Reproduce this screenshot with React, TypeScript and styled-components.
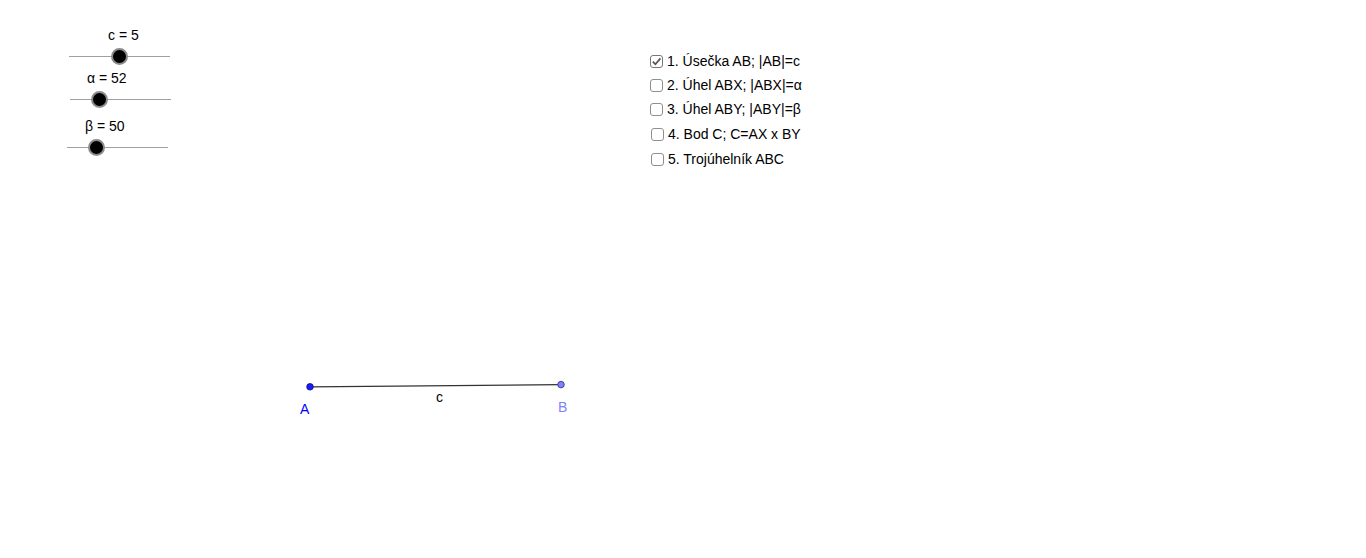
import styled, { createGlobalStyle } from "styled-components";

const GlobalStyle = createGlobalStyle`
  html, body {
    margin: 0;
    padding: 0;
    background: #ffffff;
  }
  body {
    font-family: "Liberation Sans", Arial, sans-serif;
  }
`;

type SliderData = {
  label: string;
  shift: number; // track offset inside the slider column
  labelAt: number; // label offset from track start
  knobAt: number; // knob centre from track start
  space: number; // space above the slider
};

const sliders: SliderData[] = [
  { label: "c = 5", shift: 2, labelAt: 39, knobAt: 50.5, space: 0 },
  { label: "α = 52", shift: 3, labelAt: 17, knobAt: 29, space: 1 },
  { label: "β = 50", shift: 0, labelAt: 18, knobAt: 29, space: 6 },
];

const tasks = [
  { text: "1. Úsečka AB; |AB|=c", checked: true, shift: 0, space: 0 },
  { text: "2. Úhel ABX; |ABX|=α", checked: false, shift: 0, space: 10 },
  { text: "3. Úhel ABY; |ABY|=β", checked: false, shift: 0, space: 10 },
  { text: "4. Bod C; C=AX x BY", checked: false, shift: 1, space: 11 },
  { text: "5. Trojúhelník ABC", checked: false, shift: 1, space: 11 },
];

const Check = () => (
  <svg width="11" height="11" viewBox="0 0 11 11">
    <path d="M1.8 5.6 L4.4 8.2 L9.4 2.4" fill="none" stroke="#555" strokeWidth="1.7" />
  </svg>
);

export default function App() {
  return (
    <>
      <GlobalStyle />
      <Canvas>
        <SliderColumn>
          {sliders.map((s) => (
            <SliderBlock key={s.label} $shift={s.shift} $space={s.space}>
              <SliderLabel $at={s.labelAt}>{s.label}</SliderLabel>
              <TrackArea>
                <Track />
                <Knob $at={s.knobAt} />
              </TrackArea>
            </SliderBlock>
          ))}
        </SliderColumn>

        <TaskList>
          {tasks.map((t) => (
            <Task key={t.text} $shift={t.shift} $space={t.space}>
              <Box $checked={t.checked}>{t.checked && <Check />}</Box>
              <TaskText>{t.text}</TaskText>
            </Task>
          ))}
        </TaskList>

        <Geometry width="1366" height="558">
          <line x1="310" y1="386.8" x2="561" y2="384.6" stroke="#333" strokeWidth="1.2" />
          <circle cx="310" cy="386.8" r="3.3" fill="#1a1aff" stroke="#101070" strokeWidth="0.8" />
          <circle cx="561" cy="384.6" r="3.3" fill="#7f7fff" stroke="#303080" strokeWidth="0.8" />
          <PointLabel x="300" y="414" fill="#0000ff">A</PointLabel>
          <PointLabel x="558" y="412" fill="#7f7fff">B</PointLabel>
          <PointLabel x="436" y="402" fill="#000000">c</PointLabel>
        </Geometry>
      </Canvas>
    </>
  );
}

const Canvas = styled.div`
  position: relative;
  width: 1366px;
  height: 558px;
  overflow: hidden;
  background: #ffffff;
`;

const SliderColumn = styled.div`
  position: absolute;
  left: 67px;
  top: 27px;
  width: 104px;
  display: flex;
  flex-direction: column;
`;

const SliderBlock = styled.div<{ $shift: number; $space: number }>`
  display: flex;
  flex-direction: column;
  margin-top: ${(p) => p.$space}px;
  padding-left: ${(p) => p.$shift}px;
`;

const SliderLabel = styled.div<{ $at: number }>`
  height: 16px;
  padding-left: ${(p) => p.$at}px;
  font-size: 14px;
  line-height: 16px;
  color: #000000;
  white-space: nowrap;
`;

const TrackArea = styled.div`
  position: relative;
  width: 101px;
  height: 26px;
  display: flex;
  align-items: center;
`;

const Track = styled.div`
  flex: 1;
  height: 1px;
  background: #a0a0a0;
`;

const Knob = styled.div<{ $at: number }>`
  position: absolute;
  left: ${(p) => p.$at - 8.5}px;
  top: 4.5px;
  width: 17px;
  height: 17px;
  box-sizing: border-box;
  border-radius: 50%;
  background: #000000;
  border: 2.5px solid #8c8c8c;
`;

const TaskList = styled.div`
  position: absolute;
  left: 650px;
  top: 54px;
  display: flex;
  flex-direction: column;
`;

const Task = styled.label<{ $shift: number; $space: number }>`
  display: flex;
  align-items: center;
  gap: 4px;
  height: 14px;
  margin-top: ${(p) => p.$space}px;
  padding-left: ${(p) => p.$shift}px;
`;

const Box = styled.span<{ $checked: boolean }>`
  display: flex;
  align-items: center;
  justify-content: center;
  width: 13px;
  height: 13px;
  box-sizing: border-box;
  border: 1px solid ${(p) => (p.$checked ? "#777777" : "#8f8f8f")};
  border-radius: 3px;
  background: #ffffff;
`;

const TaskText = styled.span`
  font-size: 14px;
  line-height: 14px;
  color: #000000;
  white-space: nowrap;
`;

const Geometry = styled.svg`
  position: absolute;
  left: 0;
  top: 0;
`;

const PointLabel = styled.text`
  font-family: "Liberation Sans", Arial, sans-serif;
  font-size: 14px;
`;
